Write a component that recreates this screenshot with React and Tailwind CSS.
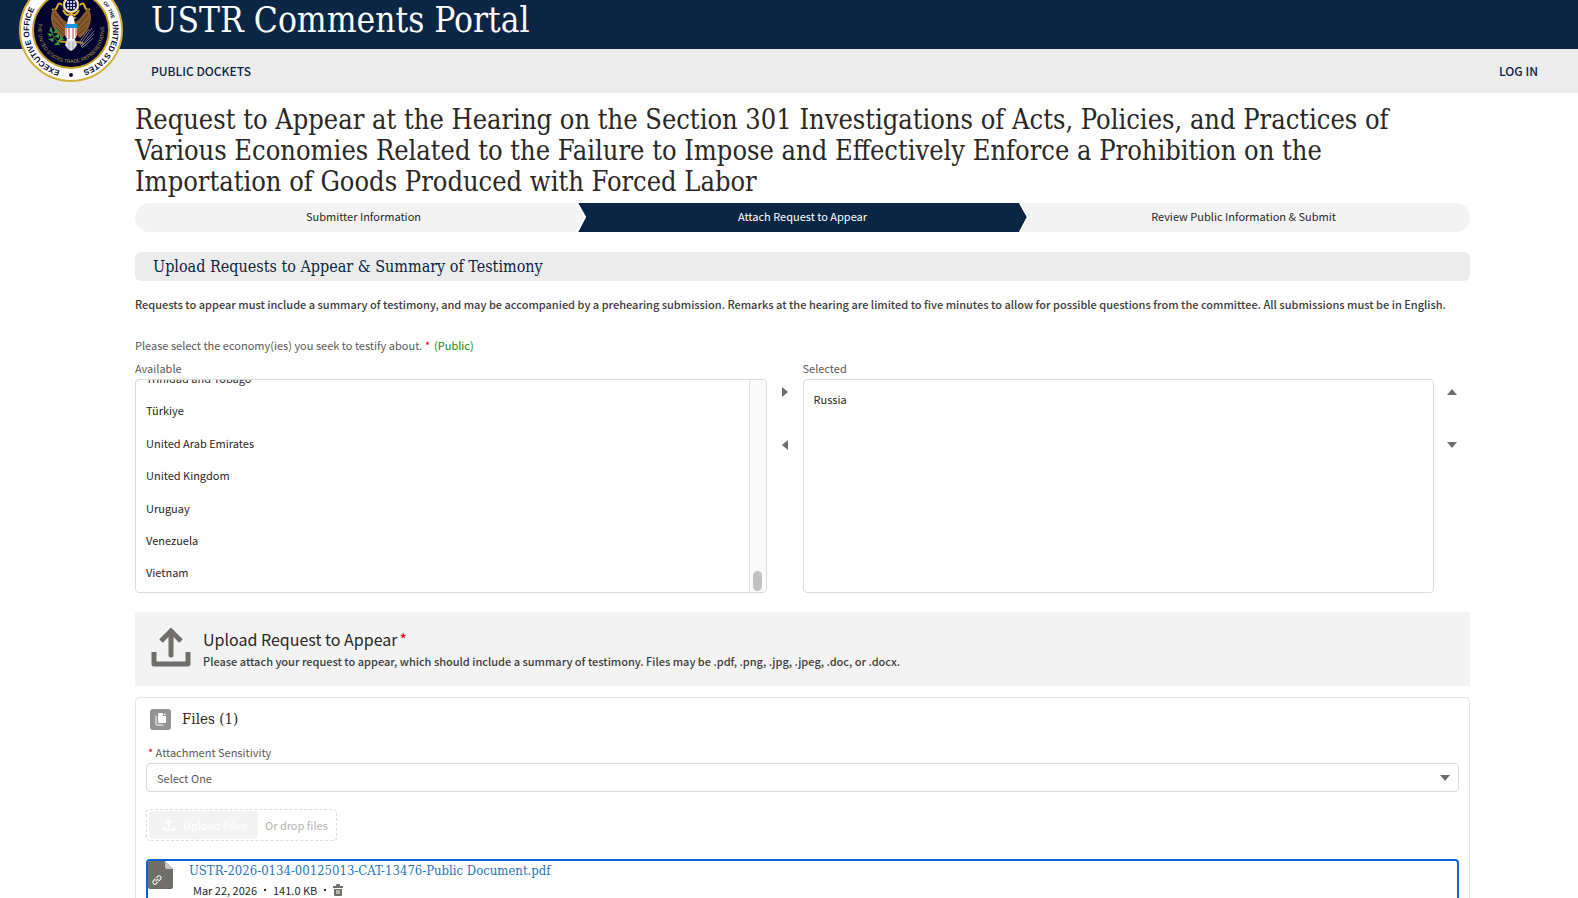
/**
 * USTR Comments Portal - "Attach Request to Appear" step
 * Step 2 of 3: pick economies, then attach the request file.
 */

import { useState } from "react";

const STEPS = ["Submitter Information", "Attach Request to Appear", "Review Public Information & Submit"];

const AVAILABLE = [
  "Trinidad and Tobago",
  "Türkiye",
  "United Arab Emirates",
  "United Kingdom",
  "Uruguay",
  "Venezuela",
  "Vietnam",
];

const SERIF = "font-['DejaVu_Serif_Condensed','DejaVu_Serif',serif]";

function Seal() {
  return (
    <svg viewBox="-52 -52 104 104" className="h-[104px] w-[104px]" role="img" aria-label="Seal">
      <defs>
        <path id="outer" d="M0,42 A42,42 0 0 1 0,-42 A42,42 0 0 1 0,42" />
        <path id="inner" d="M-32,-8 A33,33 0 1 0 32,-8" />
      </defs>
      <circle r="51" fill="#fff" stroke="#d2b13a" strokeWidth="2" />
      <circle r="38" fill="#02022f" stroke="#c9a227" strokeWidth="2" />
      <g fill="#0b0b3b" fontFamily="Liberation Sans, sans-serif" fontWeight="bold" fontSize="8">
        <text><textPath href="#outer" startOffset="11">EXECUTIVE OFFICE</textPath></text>
        <text><textPath href="#outer" startOffset="189">UNITED STATES</textPath></text>
        <text fontSize="5"><textPath href="#outer" startOffset="168">OF THE</textPath></text>
      </g>
      <circle cy="45" r="2" fill="#0b0b3b" />
      <text fill="#b59b4e" fontFamily="Liberation Sans, sans-serif" fontSize="5">
        <textPath href="#inner" startOffset="1">THE UNITED STATES TRADE REPRESENTATIVE</textPath>
      </text>
      {/* ribbon + wings */}
      <path d="M-9,-25 C-15,-31 -12,-17 -19,-21 M9,-25 C15,-31 12,-17 19,-21 M-8,-20 Q-4,-12 0,-17 Q4,-12 8,-20" fill="none" stroke="#d8b02c" strokeWidth="2" />
      <path d="M-17,-22 C-23,-14 -20,0 -9,8 L-5,4 L-4,-8 C-9,-10 -12,-16 -17,-22Z" fill="#86592f" />
      <path d="M17,-22 C23,-14 20,0 9,8 L5,4 L4,-8 C9,-10 12,-16 17,-22Z" fill="#86592f" />
      <path d="M-17,-16 L-7,-4 M-18,-10 L-7,1 M-15,-3 L-7,5 M17,-16 L7,-4 M18,-10 L7,1 M15,-3 L7,5" stroke="#5e3a1c" />
      {/* crest */}
      <circle cy="-25" r="7" fill="#12124a" stroke="#f3edd8" strokeWidth="2" />
      <circle cy="-25" r="8" fill="none" stroke="#d8b02c" />
      <g fill="#fff">
        {[-28, -25, -22].map((y) => [-3, 0, 3].map((x) => <circle key={`${x}${y}`} cx={x} cy={y} r="1" />))}
      </g>
      <path d="M-4,-6 L-3,-12 Q0,-18 3,-12 L4,-6Z" fill="#f5f5f5" />
      <path d="M2,-14 L6,-12 L3,-11Z" fill="#d8b02c" />
      {/* tail, olive branch, arrows */}
      <path d="M-4,9 L4,9 L6,15 Q4,19 0,21 Q-4,19 -6,15Z" fill="#dedee2" />
      <path d="M-2,12 V19 M2,12 V19" stroke="#a4a4ac" />
      <path d="M-5,12 L-13,11 M5,12 L12,13" stroke="#c99a2d" strokeWidth="2" />
      <path d="M-9,13 Q-19,11 -20,-3" fill="none" stroke="#2b7d35" />
      <path d="M-20,-3 l-2,4 4,2z M-18,4 l-6,-1 3,4z M-18,3 l4,-5 1,5z M-17,7 l5,-4 0,5z M-17,8 l-6,1 5,3z M-13,11 l-4,4 6,0z M-12,10 l2,-5 3,5z" fill="#38973f" />
      <path d="M9,15 L21,-2 M10,16 L23,1 M10,17 L23,4 M8,13 L18,-1 M11,18 L22,8" stroke="#777b86" />
      <path d="M-6,-6 H6 V5 Q5,9 0,11 Q-5,9 -6,5Z" fill="#fff" />
      <path d="M-5,-2 V7 M-2,-2 V9 M2,-2 V9 M5,-2 V7" stroke="#d63748" />
      <path d="M-6,-6 H6 V-2 H-6Z" fill="#1c93dc" />
    </svg>
  );
}

function Triangle({ d }) {
  return (
    <svg viewBox="0 0 10 10" className="h-[10px] w-[10px] fill-[#706e6b]" aria-hidden="true">
      <path d={d} />
    </svg>
  );
}

function MoveButtons({ first, second }) {
  return (
    <div className="flex w-9 shrink-0 flex-col items-center gap-[43px] pt-[29px]">
      <button type="button" aria-label={first.label} className="block"><Triangle d={first.d} /></button>
      <button type="button" aria-label={second.label} className="block"><Triangle d={second.d} /></button>
    </div>
  );
}

function UploadIcon({ className }) {
  return (
    <svg viewBox="0 0 40 40" className={className} fill="none" stroke="currentColor" strokeWidth="5" aria-hidden="true">
      <path d="M3,25 V37 H37 V25" strokeLinejoin="round" />
      <path d="M20,28 V5" strokeLinecap="round" />
      <path d="M10,14 L20,4 L30,14" />
    </svg>
  );
}

function App() {
  const [sensitivity, setSensitivity] = useState("");

  return (
    <div className="h-screen overflow-hidden bg-white font-['Noto_Sans_CJK_SC',sans-serif] text-[#2b2826]">
      <header className="relative">
        <div className="flex h-[49px] items-start bg-[#0a2644] pl-[151px]">
          <div className={`${SERIF} text-[35px] leading-10 text-white`}>USTR Comments Portal</div>
        </div>
        <nav className="flex h-11 items-center justify-between bg-[#ececec] pr-10 pl-[151px] text-[12px] leading-5 font-medium text-[#0a2644]">
          <a href="#dockets">PUBLIC DOCKETS</a>
          <a href="#login">LOG IN</a>
        </nav>
        <div className="absolute -top-[22px] left-[19px]"><Seal /></div>
      </header>

      <main className="pt-[11px] pr-[108px] pl-[135px]">
        <h1 className={`${SERIF} text-[27px] leading-[31px]`}>
          Request to Appear at the Hearing on the Section 301 Investigations of Acts, Policies, and Practices of
          Various Economies Related to the Failure to Impose and Effectively Enforce a Prohibition on the
          Importation of Goods Produced with Forced Labor
        </h1>

        <ol className="mt-[6px] flex h-[29px] overflow-hidden rounded-full bg-[#f3f3f3] text-[11px] leading-4">
          {STEPS.map((step, i) => (
            <li key={step} className="relative flex w-1/3 justify-center pt-[5px] first:pl-3 last:pr-2">
              {i === 1 && (
                <svg viewBox="0 0 450 29" preserveAspectRatio="none" className="absolute inset-y-0 left-0 h-full w-full overflow-visible" aria-hidden="true">
                  <path d="M-2,0 H444 L452,14 L444,29 H-2 L6,14Z" fill="#0a2644" />
                  <path d="M-3,0 L5,14 L-3,29 M445,0 L453,14 L445,29" fill="none" stroke="#fff" strokeWidth="2" />
                </svg>
              )}
              <a href={`#step-${i + 1}`} className={i === 1 ? "relative text-white" : ""}>{step}</a>
            </li>
          ))}
        </ol>

        <h2 className={`${SERIF} mt-5 rounded-md bg-[#ececec] pl-[18px] text-[16px] leading-[29px] text-[#0a2644]`}>
          Upload Requests to Appear &amp; Summary of Testimony
        </h2>

        <p className="mt-[13px] text-[11px] leading-5 font-medium text-[#403d3b]">
          Requests to appear must include a summary of testimony, and may be accompanied by a prehearing submission. Remarks at the hearing are limited to five minutes to allow for possible questions from the committee. All submissions must be in English.
        </p>

        {/* Economy picker */}
        <div className="mt-[21px] text-[11px] leading-5 text-[#5c5a58]">
          Please select the economy(ies) you seek to testify about. <span className="text-[#e2001a]">*</span>
          <span className="ml-1 text-[#108a10]">(Public)</span>
        </div>
        <div className="mt-[3px] flex text-[11px]">
          <div className="min-w-0 flex-1">
            <div id="available" className="leading-5 text-[#5c5a58]">Available</div>
            <div className="mt-px flex h-[214px] overflow-hidden rounded border border-[#dddbda]">
              <div className="flex min-w-0 flex-1 flex-col justify-end overflow-hidden pb-[3px]">
                <ul role="listbox" aria-labelledby="available" className="flex h-[227px] shrink-0 flex-col">
                  {AVAILABLE.map((name) => (
                    <li key={name} role="option" aria-selected="false" className="flex flex-1 items-center pl-[10px]">{name}</li>
                  ))}
                </ul>
              </div>
              <div className="flex w-[17px] flex-col items-center justify-end border-l border-[#e4e4e4] bg-[#fafafa] pb-px">
                <div className="h-5 w-[9px] rounded-full bg-[#c1c1c1]" />
              </div>
            </div>
          </div>
          <MoveButtons
            first={{ label: "Move to Selected", d: "M2,0 L8,5 L2,10Z" }}
            second={{ label: "Move to Available", d: "M8,0 L2,5 L8,10Z" }}
          />
          <div className="min-w-0 flex-1">
            <div id="selected" className="leading-5 text-[#5c5a58]">Selected</div>
            <ul role="listbox" aria-labelledby="selected" className="mt-px h-[214px] rounded border border-[#dddbda] pt-[3px]">
              <li role="option" aria-selected="false" className="flex h-8 items-center pl-[10px]">Russia</li>
            </ul>
          </div>
          <MoveButtons
            first={{ label: "Move up", d: "M0,8 L5,2 L10,8Z" }}
            second={{ label: "Move down", d: "M0,2 L5,8 L10,2Z" }}
          />
        </div>

        {/* Upload banner */}
        <section className="mt-[19px] flex h-[74px] items-center bg-[#f3f3f3] pl-4">
          <UploadIcon className="mb-1 h-10 w-10 text-[#706e6b]" />
          <div className="ml-3">
            <h3 className="text-[16px] leading-6">Upload Request to Appear<span className="ml-[2px] text-[#e2001a]">*</span></h3>
            <p className="text-[11px] leading-5 font-medium text-[#403d3b]">
              Please attach your request to appear, which should include a summary of testimony. Files may be .pdf, .png, .jpg, .jpeg, .doc, or .docx.
            </p>
          </div>
        </section>

        {/* Files card */}
        <section className="mt-[11px] rounded border border-[#e5e5e5] px-[10px] pt-[10px] pb-4">
          <div className="flex h-[22px] items-center gap-[11px] pl-1">
            <svg viewBox="0 0 21 21" className="h-[21px] w-[21px]" aria-hidden="true">
              <rect width="21" height="21" rx="3" fill="#939393" />
              <path d="M9,4 H13 V7 H16 V13 Q16,14 15,14 H9 Q8,14 8,13 V5 Q8,4 9,4Z M14,4 L16,6 H14Z" fill="#fff" />
              <path d="M6,7 V15 Q6,16 7,16 H13" fill="none" stroke="#fff" strokeLinecap="round" />
            </svg>
            <h3 className={`${SERIF} text-[15px] leading-5`}>Files (1)</h3>
          </div>

          <label htmlFor="sensitivity" className="mt-3 block pl-[2px] text-[11px] leading-5 text-[#5c5a58]">
            <span className="text-[#e2001a]">*</span> Attachment Sensitivity
          </label>
          <div className="relative mt-px">
            <select
              id="sensitivity"
              value={sensitivity}
              onChange={(e) => setSensitivity(e.target.value)}
              className="block h-[29px] w-full appearance-none rounded border border-[#dddbda] bg-white pl-[10px] text-[11px] leading-5 text-[#5c5a58]"
            >
              <option value="">Select One</option>
              <option value="public">Public</option>
              <option value="confidential">Business Confidential</option>
            </select>
            <div className="pointer-events-none absolute top-[10px] right-[9px]"><Triangle d="M0,2 L5,8 L10,2Z" /></div>
          </div>

          <div className="mt-[17px] flex h-8 w-[191px] items-center rounded border border-dashed border-[#dddbda] pl-[2px] text-[11px] text-[#b5b4b3]">
            <button type="button" disabled className="flex h-7 w-[109px] items-center gap-2 rounded bg-[#f3f3f3] pl-[14px] text-white">
              <UploadIcon className="h-3 w-3" />
              Upload Files
            </button>
            <span className="ml-[7px]">Or drop files</span>
          </div>

          <div className="mt-[18px] flex h-14 rounded-sm border-2 border-[#0b62d0]">
            <svg viewBox="0 0 25 28" className="h-7 w-[25px] shrink-0" aria-hidden="true">
              <path d="M2,0 H17 L25,8 V26 Q25,28 23,28 H2 Q0,28 0,26 V2 Q0,0 2,0Z" fill="#706e6b" />
              <path d="M17,0 L25,8 H19 Q17,8 17,6Z" fill="#c9c8c7" />
              <g fill="none" stroke="#fff" transform="rotate(-45 9 19)">
                <path d="M9,17 H6 Q4,17 4,19 Q4,21 6,21 H8 M9,21 H12 Q14,21 14,19 Q14,17 12,17 H10 M7,19 H11" />
              </g>
            </svg>
            <div className="ml-4">
              <a href="#file" className={`${SERIF} block text-[13px] leading-5 text-[#2a75b5]`}>
                USTR-2026-0134-00125013-CAT-13476-Public Document.pdf
              </a>
              <div className="flex items-center gap-[7px] pl-1 text-[11px] leading-[18px]">
                <span>Mar 22, 2026</span>
                <span className="h-[2px] w-[2px] bg-[#2b2826]" />
                <span>141.0 KB</span>
                <span className="h-[2px] w-[2px] bg-[#2b2826]" />
                <button type="button" aria-label="Delete file">
                  <svg viewBox="0 0 10 12" className="h-3 w-[10px]" aria-hidden="true">
                    <path d="M0,2 H3 V1 Q3,0 4,0 H6 Q7,0 7,1 V2 H10 V4 H0Z M1,5 H9 V11 Q9,12 8,12 H2 Q1,12 1,11Z" fill="#706e6b" />
                    <path d="M4,6 V10 M6,6 V10" stroke="#fff" />
                  </svg>
                </button>
              </div>
            </div>
          </div>
        </section>
      </main>
    </div>
  );
}

export default App;
